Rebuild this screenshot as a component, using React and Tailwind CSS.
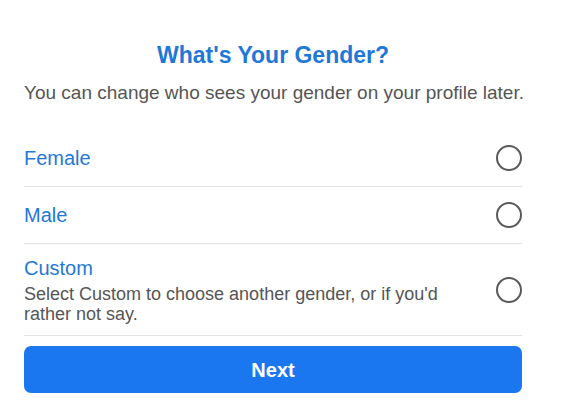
export default function App() {
  const Circle = () => (
    <span className="block w-[26px] h-[26px] rounded-full border-2 border-[#5a5a5a] shrink-0" />
  );
  return (
    <div className="w-[575px] h-[415px] bg-white overflow-hidden" style={{ fontFamily: '"Liberation Sans", Arial, sans-serif' }}>
      <div className="ml-[24px] w-[498px] flex flex-col">
        <h1 className="mt-[42px] h-[26px] text-center text-[23px] leading-[26px] font-bold text-[#1f78d8]">What's Your Gender?</h1>
        <p className="mt-[14px] text-[19px] leading-[22px] text-[#555555] whitespace-nowrap">You can change who sees your gender on your profile later.</p>
        <div className="mt-[26px] h-[57px] flex items-center justify-between border-b border-[#e3e3e3]">
          <span className="text-[20px] text-[#1f78d8]">Female</span>
          <Circle />
        </div>
        <div className="h-[57px] flex items-center justify-between border-b border-[#e3e3e3]">
          <span className="text-[20px] text-[#1f78d8]">Male</span>
          <Circle />
        </div>
        <div className="h-[92px] flex items-center justify-between border-b border-[#e3e3e3]">
          <div className="flex flex-col">
            <span className="text-[20px] leading-[24px] text-[#1f78d8]">Custom</span>
            <span className="mt-[4px] w-[440px] text-[18px] leading-[20px] text-[#555555]">Select Custom to choose another gender, or if you'd rather not say.</span>
          </div>
          <Circle />
        </div>
        <button className="mt-[10px] h-[47px] rounded-[7px] bg-[#1a77f0] text-white text-[20px] font-bold">Next</button>
      </div>
    </div>
  );
}
